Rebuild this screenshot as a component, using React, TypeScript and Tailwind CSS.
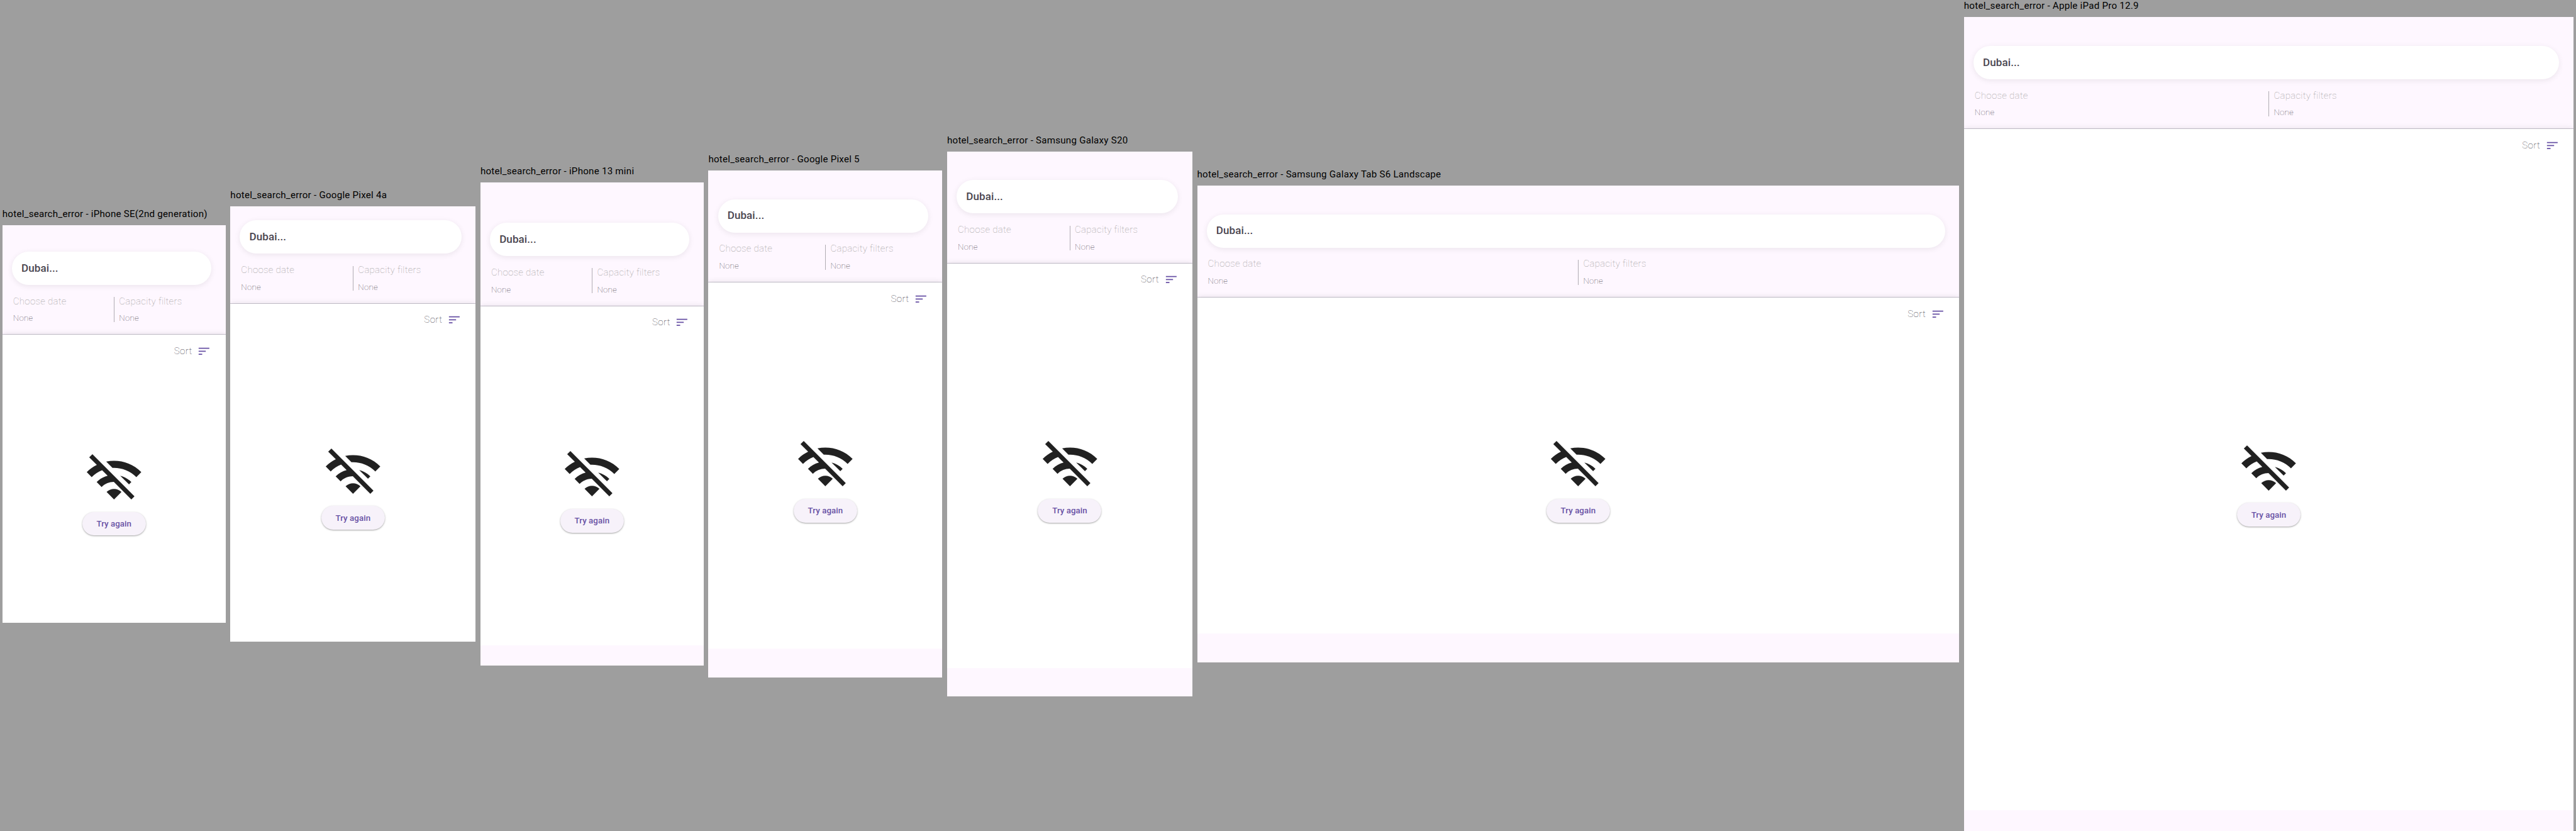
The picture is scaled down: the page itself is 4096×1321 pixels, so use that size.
import React from "react";

type Device = {
  name: string;
  width: string;
  height: string;
  top: string;
  bottom: string;
};

const devices: Device[] = [
  { name: "iPhone SE(2nd generation)", width: "w-[375px]", height: "h-[667px]", top: "pt-[44px]", bottom: "h-0" },
  { name: "Google Pixel 4a", width: "w-[412px]", height: "h-[732px]", top: "pt-[24px]", bottom: "h-0" },
  { name: "iPhone 13 mini", width: "w-[375px]", height: "h-[812px]", top: "pt-[68px]", bottom: "h-[34px]" },
  { name: "Google Pixel 5", width: "w-[393px]", height: "h-[851px]", top: "pt-[48px]", bottom: "h-[48px]" },
  { name: "Samsung Galaxy S20", width: "w-[412px]", height: "h-[915px]", top: "pt-[48px]", bottom: "h-[48px]" },
  { name: "Samsung Galaxy Tab S6 Landscape", width: "w-[1280px]", height: "h-[800px]", top: "pt-[48px]", bottom: "h-[48px]" },
  { name: "Apple iPad Pro 12.9", width: "w-[1024px]", height: "h-[1366px]", top: "pt-[48px]", bottom: "h-[34px]" },
];

function Filter({ label, inset }: { label: string; inset: string }) {
  return (
    <div className={`flex flex-col font-thin whitespace-nowrap ${inset}`}>
      <span className="text-[16px] leading-[24px] tracking-[0.25px] text-[#9e9e9e]">{label}</span>
      <span className="mt-[7.5px] text-[14px] leading-[20px] tracking-[0.25px] text-[#49454f]">None</span>
    </div>
  );
}

function Header({ top }: { top: string }) {
  return (
    <header className={`shrink-0 border-b border-[#cac4d0] bg-[#fef7ff] ${top}`}>
      <div className="ml-4 mr-6 flex h-14 items-center rounded-full bg-white pl-4 text-[18px] font-medium tracking-[0.1px] text-[#49454f] shadow-[0_2px_10px_rgba(0,0,0,0.08)]">
        Dubai...
      </div>
      <div className="flex h-[83px] pt-[15.5px]">
        <div className="w-0 flex-1">
          <Filter label="Choose date" inset="pl-[18px]" />
        </div>
        <div className="mt-[5px] h-[42px] w-px bg-[#b0acb2]" />
        <div className="w-0 flex-1">
          <Filter label="Capacity filters" inset="pl-[8px]" />
        </div>
      </div>
    </header>
  );
}

function SortRow() {
  return (
    <div className="flex h-[51px] shrink-0 items-center justify-end pt-[3.5px] pr-[24px]">
      <span className="text-[16px] font-thin tracking-[0.4px] text-[#49454f]">Sort</span>
      <svg className="ml-[8px] size-6" viewBox="0 0 24 24" fill="#6750a4">
        <path d="M3 18h6v-2H3v2zM3 6v2h18V6H3zm0 7h12v-2H3v2z" />
      </svg>
    </div>
  );
}

function ConnectionError() {
  return (
    <div className="flex min-h-0 flex-1 flex-col items-center justify-center">
      <svg className="size-[100px]" viewBox="0 0 24 24" fill="#212121">
        <path d="M22.99 9C19.15 5.16 13.8 3.76 8.84 4.78l2.52 2.52c3.47-.17 6.99 1.05 9.63 3.7l2-2zm-4 4c-1.29-1.29-2.84-2.13-4.49-2.56l3.53 3.53.96-.97zM2 3.05L5.07 6.1C3.6 6.82 2.22 7.78 1 9l1.99 2c1.24-1.24 2.67-2.16 4.2-2.77l2.24 2.24C7.81 10.89 6.27 11.73 5 13v.01L6.99 15c1.36-1.36 3.14-2.04 4.92-2.06L18.98 20l1.27-1.26L3.29 1.79 2 3.05zM9 17l3 3 3-3c-1.65-1.66-4.34-1.66-6 0z" />
      </svg>
      <button className="my-1 h-10 rounded-full bg-[#f7f2fa] px-6 pt-[1px] text-[14px] font-medium tracking-[0.1px] text-[#6750a4] shadow-[0_1px_2px_rgba(0,0,0,0.25),0_1px_4px_rgba(0,0,0,0.12)]">
        Try again
      </button>
    </div>
  );
}

function Screen({ device }: { device: Device }) {
  return (
    <section className="flex shrink-0 flex-col">
      <h2 className="h-[29px] pt-[0.5px] text-[16px] leading-[19px] tracking-[0.25px] whitespace-nowrap text-black">
        hotel_search_error - {device.name}
      </h2>
      <div className={`flex flex-col overflow-hidden bg-white ${device.width} ${device.height}`}>
        <Header top={device.top} />
        {/* The list sheet casts its shadow up onto the header */}
        <div className="flex min-h-0 flex-1 flex-col bg-white shadow-[0_0_10px_rgba(0,0,0,0.12)]">
          <SortRow />
          <ConnectionError />
        </div>
        <div className={`relative shrink-0 bg-[#fef7ff] ${device.bottom}`} />
      </div>
    </section>
  );
}

export default function App() {
  return (
    <main className="flex h-[1321px] w-[4096px] overflow-hidden bg-[#9e9e9e] font-['Roboto',sans-serif]">
      <div className="flex h-[1395px] w-[4327px] shrink-0 items-center gap-2 px-1 [zoom:0.94661]">
        {devices.map((device) => (
          <Screen key={device.name} device={device} />
        ))}
      </div>
    </main>
  );
}
